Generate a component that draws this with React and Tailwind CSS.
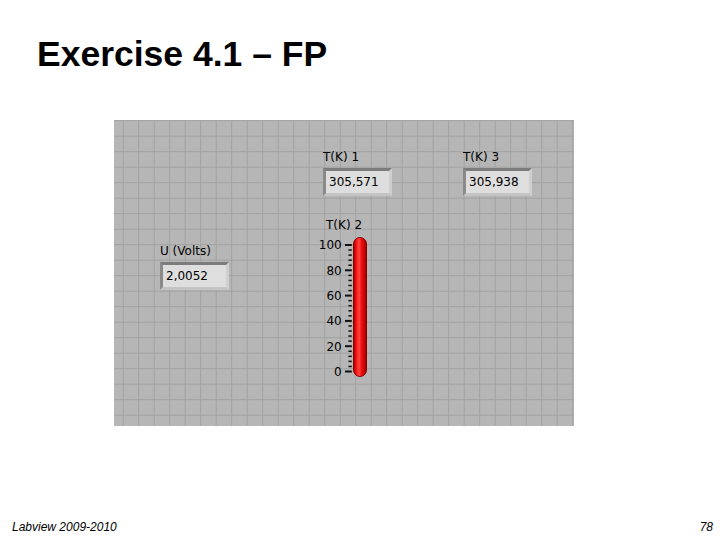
import React from "react";

const lv = { fontFamily: '"DejaVu Sans", Verdana, sans-serif' };

function Indicator({ value }) {
  return (
    <div className="w-[69px] h-[28px] border-[3px] border-t-[#7c7c7c] border-l-[#8a8a8a] border-r-[#cfcfcf] border-b-[#c4c4c4] bg-[#dedede] flex items-center pl-[3px]">
      <span className="text-[12px] leading-[14px] text-black" style={lv}>{value}</span>
    </div>
  );
}

function Control({ label, value, className }) {
  return (
    <div className={"absolute flex flex-col gap-[4.4px] " + className}>
      <span className="text-[12px] leading-[14px] text-black" style={lv}>{label}</span>
      <Indicator value={value} />
    </div>
  );
}

function Ticks() {
  const step = 25.3;
  const ticks = [];
  for (let i = 0; i <= 25; i++) {
    const y = 8 + i * (step / 5);
    const major = i % 5 === 0;
    ticks.push(
      <rect
        key={i}
        x={major ? 0 : 3.4}
        y={y - (major ? 1 : 0.75)}
        width={major ? 6.8 : 3.4}
        height={major ? 2 : 1.5}
        fill="#111"
      />
    );
  }
  return (
    <svg className="ml-[3.3px] mt-[0.6px] shrink-0" width="8" height="145">
      {ticks}
    </svg>
  );
}

function Thermometer() {
  const labels = ["100", "80", "60", "40", "20", "0"];
  return (
    <div className="absolute left-[188px] top-[97.6px] flex flex-col">
      <span className="pl-[24px] text-[12px] leading-[14px] text-black" style={lv}>T(K) 2</span>
      <div className="flex mt-[5.1px]">
        <div className="w-[39.7px] pt-[1.8px] flex flex-col gap-[11.3px] text-right text-[12px] leading-[14px] text-black" style={lv}>
          {labels.map((l) => (
            <span key={l}>{l}</span>
          ))}
        </div>
        <Ticks />
        <div className="ml-[0.3px] w-[14px] h-[140px] rounded-full border border-[#8a0000] bg-[linear-gradient(to_right,#b00000,#ff1c1c_25%,#ff4545_42%,#f21010_62%,#a80000)]" />
      </div>
    </div>
  );
}

export default function App() {
  return (
    <div className="w-[720px] h-[540px] bg-white flex flex-col" style={{ fontFamily: '"Liberation Sans", Arial, sans-serif' }}>
      <h1 className="pl-[37px] pt-[37px] text-[35.5px] leading-none font-bold text-black">
        Exercise 4.1 – FP
      </h1>
      <div className="ml-[114px] mt-[47.5px] w-[460px] h-[306px] relative bg-[#b6b6b6] [background-image:linear-gradient(to_right,#a1a1a1_1px,transparent_1px),linear-gradient(to_bottom,#a1a1a1_1px,transparent_1px)] [background-size:15.5px_15.5px] [background-position:8.7px_0.2px]">
        <Control label="T(K) 1" value="305,571" className="left-[209px] top-[29.6px]" />
        <Control label="T(K) 3" value="305,938" className="left-[349px] top-[29.6px]" />
        <Control label="U (Volts)" value="2,0052" className="left-[46px] top-[123.6px]" />
        <Thermometer />
      </div>
      <div className="mt-auto flex justify-between pl-[12px] pr-[7px] pb-[6px] text-[12px] leading-[14px] italic text-black">
        <span>Labview 2009-2010</span>
        <span>78</span>
      </div>
    </div>
  );
}
